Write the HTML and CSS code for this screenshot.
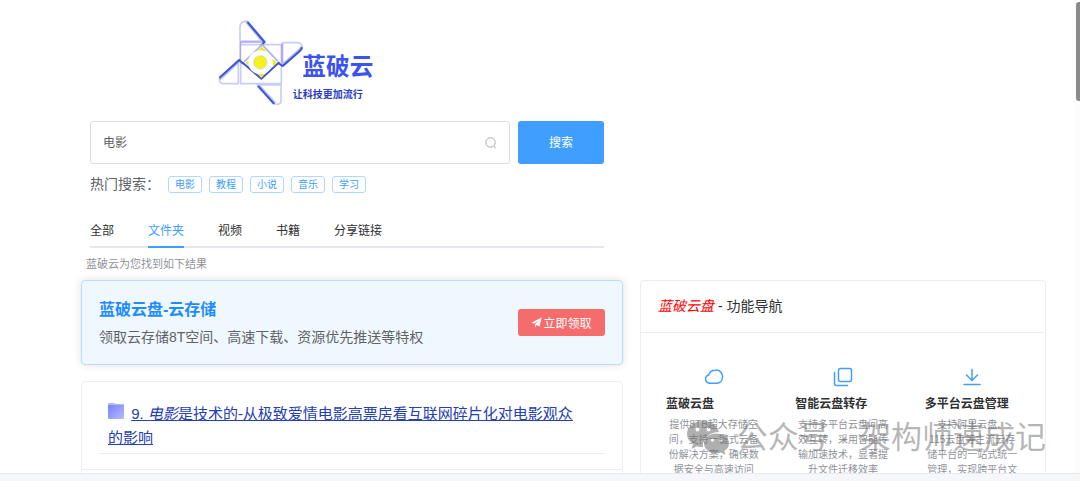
FILE: index.html
```html
<!DOCTYPE html>
<html lang="zh-CN">
<head>
<meta charset="utf-8">
<title>蓝破云</title>
<link rel="stylesheet" href="styles.css">
</head>
<body>
<div class="viewport">
  <main class="page">
    <header class="top">
      <div class="top-inner">
        <svg class="logo" viewBox="48 24 480 270" role="img" aria-label="蓝破云">
          <g fill="none" stroke-linecap="round" stroke-linejoin="round" stroke-width="5">
            <path stroke="#c9cdfa" d="M190 93H120V48Q122 36 134 34H142M122 104H244V222M248 162V98H290Q306 98 306 110M115 160V221H70Q58 220 58 208M122 158V221H244M172 225H243V276Q240 284 228 283"/>
            <path stroke="#a9a5f2" d="M121 98V152M122 96H190M246 102V160"/>
            <path stroke="#b9c2f2" stroke-width="11" d="M142 37L192 96M304 114Q303 118 299 121L250 164M62 204L116 153M176 228L222 278"/>
            <path stroke="#4056cf" stroke-width="6" d="M144 38L193 96L184 106M305 114Q304 118 300 122L248 168L236 160M60 202L118 150L128 160M176 230L221 280"/>
            <path stroke="#4056cf" stroke-width="6" d="M128 158L184 206L236 158"/>
            <path stroke="#aeb5e6" d="M184 106L134 154M186 104L232 152"/>
          </g>
          <path fill="#ece82a" d="M172 122L185 110L200 124ZM137 158L150 148V172ZM230 156L216 146L220 170ZM174 192H194L184 204Z"/>
          <circle cx="181" cy="157" r="36" fill="#fff"/>
          <circle cx="181" cy="157" r="20" fill="#f7f01f" stroke="#cfd2b0" stroke-width="2"/>
          <text class="logo-name" x="307" y="195">蓝破云</text>
          <text class="logo-tag" x="278" y="265">让科技更加流行</text>
        </svg>
        <form class="search">
          <label class="search-box">
            <input class="search-input" type="text" value="电影" aria-label="搜索内容">
            <svg class="search-icon" viewBox="0 0 12 12"><circle cx="5.5" cy="5.5" r="4.7"/><path d="M9 9.3L10.8 11"/></svg>
          </label>
          <button class="search-btn" type="button">搜索</button>
        </form>
        <div class="hot">
          <span class="hot-label">热门搜索：</span>
          <a class="tag" href="#">电影</a>
          <a class="tag" href="#">教程</a>
          <a class="tag" href="#">小说</a>
          <a class="tag" href="#">音乐</a>
          <a class="tag" href="#">学习</a>
        </div>
        <nav class="tabs">
          <a class="tab" href="#">全部</a>
          <a class="tab tab-active" href="#">文件夹</a>
          <a class="tab" href="#">视频</a>
          <a class="tab" href="#">书籍</a>
          <a class="tab" href="#">分享链接</a>
        </nav>
      </div>
      <p class="hint">蓝破云为您找到如下结果</p>
    </header>

    <div class="columns">
      <div class="left">
        <section class="banner">
          <div class="banner-text">
            <h2 class="banner-title">蓝破云盘-云存储</h2>
            <p class="banner-desc">领取云存储8T空间、高速下载、资源优先推送等特权</p>
          </div>
          <button class="claim" type="button"><svg class="plane" viewBox="0 0 12 12"><path d="M11.6 .6L.4 6.2L3.4 7.4L9.2 3L4.4 8V11.4L6.2 8.8L9.4 10.4Z"/></svg>立即领取</button>
        </section>
        <article class="result">
          <h3 class="result-title">
            <svg class="folder" viewBox="0 0 16 16"><defs><linearGradient id="fold" x1="0" y1="0" x2="1" y2="1"><stop offset="0" stop-color="#7286fb"/><stop offset="1" stop-color="#bcb6fb"/></linearGradient></defs><path fill="#a9bdfb" d="M0 1Q0 0 1 0H6L8 1H15Q16 1 16 2V6H0Z"/><path fill="url(#fold)" d="M0 2H16V15Q16 16 15 16H1Q0 16 0 15Z"/></svg>
            <a class="result-link" href="#">9. <em>电影</em>是技术的-从极致爱情电影高票房看互联网碎片化对电影观众的影响</a>
          </h3>
          <div class="result-more"></div>
        </article>
      </div>

      <aside class="panel">
        <h2 class="panel-head"><em class="brand">蓝破云盘</em> - 功能导航</h2>
        <div class="features">
          <section class="feature">
            <svg class="feature-icon" viewBox="0 0 20 20"><path d="M5.4 16.2A4.2 4.2 0 0 1 4.6 8C5.6 4.8 8 3.2 11.2 3.2A6.4 6.4 0 0 1 18.6 9.6C18.6 13.6 16 16.2 12.6 16.2Z"/></svg>
            <h3 class="feature-title">蓝破云盘</h3>
            <p class="feature-desc">提供8TB超大存储空<br>间，支持一键式云备<br>份解决方案，确保数<br>据安全与高速访问</p>
          </section>
          <section class="feature">
            <svg class="feature-icon" viewBox="0 0 20 20"><rect x="5.5" y="1.5" width="13" height="13" rx="2"/><path d="M1.5 5.5V16.5Q1.5 18.5 3.5 18.5H14.5"/></svg>
            <h3 class="feature-title">智能云盘转存</h3>
            <p class="feature-desc">支持多平台云盘间高<br>效互转，采用智能传<br>输加速技术，显著提<br>升文件迁移效率</p>
          </section>
          <section class="feature">
            <svg class="feature-icon" viewBox="0 0 20 20"><path d="M10 2.5V13M4.5 8L10 13.5L15.5 8M2 17.5H18"/></svg>
            <h3 class="feature-title">多平台云盘管理</h3>
            <p class="feature-desc">支持阿里云盘、<br>115云盘等主流云存<br>储平台的一站式统一<br>管理，实现跨平台文</p>
          </section>
        </div>
      </aside>
    </div>
  </main>
  <footer class="bottom-bar"></footer>
  <div class="scroll-track"><div class="scroll-thumb"></div></div>
  <div class="watermark">
    <svg class="wechat" viewBox="0 0 42 34"><path fill-rule="evenodd" d="M16 0C7 0 0 6 0 13C0 17 2 20 6 23L4.5 28L10 25.2C12 26 14 26 16 26C15 18 22 11 32 11C30 4.5 24 0 16 0ZM10.5 6.5A2 2 0 1 1 10.5 10.5A2 2 0 1 1 10.5 6.5ZM21.5 6.5A2 2 0 1 1 21.5 10.5A2 2 0 1 1 21.5 6.5Z"/><path fill-rule="evenodd" d="M29.5 12.5C22.5 12.5 17 17 17 22.5S22.5 32.5 29.5 32.5C31 32.5 32.5 32 34 31.5L38.5 34L37.3 30C40 28 42 25.5 42 22.5C42 17 36.5 12.5 29.5 12.5ZM25.5 17.5A1.6 1.6 0 1 1 25.5 20.7A1.6 1.6 0 1 1 25.5 17.5ZM34 17.5A1.6 1.6 0 1 1 34 20.7A1.6 1.6 0 1 1 34 17.5Z"/></svg>
    <span>公众号</span><span class="dot">·</span><span>架构师速成记</span>
  </div>
</div>
</body>
</html>
```
FILE: styles.css
```css
* { box-sizing: border-box; }

body {
  margin: 0;
  background: #fff;
  color: #303133;
  font-family: "Liberation Sans", "Noto Sans CJK SC", sans-serif;
  font-size: 12px;
}

h2, h3, p { margin: 0; }
a { text-decoration: none; }
button, input { font-family: inherit; }

.viewport {
  position: relative;
  display: flex;
  flex-direction: column;
  height: 100vh;
  overflow: hidden;
}

.page {
  flex: 1;
  min-height: 0;
  overflow: hidden;
  padding: 18px 34px 0 81px;
}

.bottom-bar {
  height: 8px;
  background: #f5f7fc;
  border-top: 1px solid #e8eaf0;
}

.top,
.columns {
  display: grid;
  grid-template-columns: 542fr 406fr;
  column-gap: 17px;
}

.top > * { grid-column: 1; }
.top-inner { padding: 0 19px 0 9px; }

.logo {
  display: block;
  width: 160px;
  height: 90px;
  margin-left: 126px;
}
.logo-name {
  font-family: "Noto Sans CJK SC", sans-serif;
  font-size: 71px;
  font-weight: 700;
  fill: #3c53ee;
}
.logo-tag {
  font-family: "Noto Sans CJK SC", sans-serif;
  font-size: 30px;
  font-weight: 700;
  fill: #2a3cc4;
}

.search {
  display: flex;
  gap: 8px;
  margin-top: 13px;
}
.search-box {
  flex: 1;
  display: flex;
  align-items: center;
  height: 43px;
  padding: 0 12px;
  border: 1px solid #dcdfe6;
  border-radius: 3px;
}
.search-input {
  flex: 1;
  min-width: 0;
  padding: 0 0 2px;
  border: 0;
  outline: 0;
  background: none;
  color: #606266;
  font-size: 12px;
}
.search-icon {
  width: 12px;
  height: 12px;
  fill: none;
  stroke: #a8abb2;
}
.search-btn {
  width: 86px;
  padding: 0 0 2px;
  border: 0;
  border-radius: 3px;
  background: #409eff;
  color: #fff;
  font-size: 12px;
}

.hot {
  display: flex;
  align-items: center;
  gap: 7px;
  height: 20px;
  margin-top: 10px;
}
.hot-label {
  width: 71px;
  color: #606266;
  font-size: 14px;
  line-height: 20px;
}
.tag {
  width: 34px;
  border: 1px solid #b3d8ff;
  border-radius: 3px;
  color: #409eff;
  font-size: 10px;
  line-height: 15px;
  text-align: center;
}

.tabs {
  display: flex;
  gap: 34px;
  margin-top: 20px;
  border-bottom: 2px solid #e4e7ed;
}
.tab {
  margin-bottom: -2px;
  padding-top: 2px;
  border-bottom: 2px solid transparent;
  color: #303133;
  line-height: 30px;
}
.tab-active {
  border-color: #409eff;
  color: #409eff;
}
.hint {
  padding-left: 5px;
  color: #909399;
  font-size: 11px;
  line-height: 32px;
}

.left { min-width: 0; }

.banner {
  display: flex;
  align-items: center;
  justify-content: space-between;
  min-height: 85px;
  padding: 0 17px;
  border: 1px solid #b9dcff;
  border-radius: 4px;
  background: #f0f8ff;
  box-shadow: 0 0 10px rgba(0, 0, 0, .12);
}
.banner-title {
  color: #1e8cff;
  font-size: 16px;
  line-height: 28px;
}
.banner-desc {
  color: #606266;
  font-size: 14px;
  line-height: 26px;
}
.claim {
  display: flex;
  align-items: center;
  justify-content: center;
  gap: 1px;
  width: 87px;
  height: 27px;
  padding: 0;
  border: 0;
  border-radius: 3px;
  background: #f56c6c;
  color: #fff;
  font-size: 12px;
}
.plane {
  width: 11px;
  height: 11px;
  fill: #fff;
}

.result {
  margin-top: 16px;
  padding: 20px 17px 0;
  border: 1px solid #ebeef5;
  border-radius: 4px;
}
.result-title {
  padding: 0 26px 3px 9px;
  border-bottom: 1px solid #ebeef5;
  font-size: 15px;
  font-weight: 400;
  line-height: 24px;
}
.result-link {
  color: #2440b3;
  text-decoration: underline;
}
.folder {
  width: 16px;
  height: 16px;
  margin-right: 3px;
}
.result-more {
  height: 40px;
  margin: 15px -17px 0;
  border-top: 1px solid #ebeef5;
}

.panel {
  border: 1px solid #ebeef5;
  border-radius: 4px;
}
.panel-head {
  padding: 0 17px;
  border-bottom: 1px solid #ebeef5;
  font-size: 14px;
  font-weight: 400;
  line-height: 51px;
}
.brand { color: #f00; }

.features {
  display: grid;
  grid-template-columns: repeat(3, 1fr);
  column-gap: 34px;
  padding: 34px 25px 0;
}
.feature-icon {
  display: block;
  width: 20px;
  height: 20px;
  margin: 0 auto;
  fill: none;
  stroke: #409eff;
  stroke-width: 1.5;
  stroke-linecap: round;
}
.feature-title {
  margin-top: 8px;
  font-size: 12px;
  line-height: 18px;
  white-space: nowrap;
}
.feature-desc {
  margin-top: 4px;
  color: #909399;
  font-size: 10px;
  line-height: 15px;
  text-align: center;
  white-space: nowrap;
}

.scroll-track {
  position: absolute;
  top: 0;
  right: 0;
  bottom: 8px;
  width: 6px;
  padding: 2px 0 0 2px;
  background: #fcfcfc;
}
.scroll-thumb {
  height: 99px;
  border-radius: 3px 0 0 3px;
  background: #8b8b8b;
}

.watermark {
  position: absolute;
  right: 34px;
  bottom: 23px;
  display: flex;
  align-items: center;
  gap: 8px;
  color: rgba(110, 110, 110, .5);
  font-size: 31px;
  line-height: 40px;
  white-space: nowrap;
  pointer-events: none;
}
.dot { padding: 0 2px; }
.wechat {
  width: 42px;
  height: 34px;
  fill: rgba(110, 110, 110, .55);
}
```
